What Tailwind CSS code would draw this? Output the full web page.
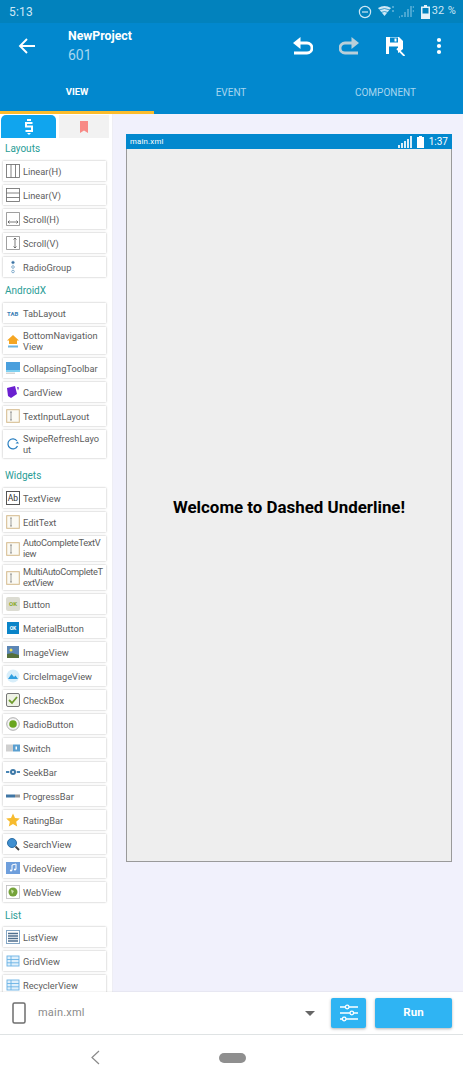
<!DOCTYPE html>
<html><head><meta charset="utf-8"><script src="https://cdn.jsdelivr.net/npm/@tailwindcss/browser@4"></script></head>
<body class="m-0">
<div class="w-[463px] h-[1080px] overflow-hidden flex flex-col bg-white font-['Roboto',sans-serif]">
  <div class="h-[23px] bg-[#0282bd] flex items-center justify-between pl-[9px] pr-[7px] text-[#cfe8f5] shrink-0">
    <span class="text-[12px] tracking-[0.2px]">5:13</span>
    <div class="flex items-center text-[11px]">
      <svg width="14" height="14" viewBox="0 0 14 14" fill="none" stroke="#cfe8f5" stroke-width="1.2"><circle cx="7" cy="7" r="5.6"/><path d="M4 7h6"/></svg>
      <svg width="16" height="13" viewBox="0 0 16 13" class="ml-[6px]"><path d="M0 3Q6.500-1 13 3L6.500 11Z" fill="#cfe8f5"/><path d="M1 5q5.500-3 11 0M3 7.500q3.500-2 7 0" fill="none" stroke="#0282bd" stroke-width=".7"/><path d="M15 1v2M15 5v2" stroke="#7fc2e2" stroke-width="1.2"/></svg>
      <svg width="16" height="13" viewBox="0 0 16 13" class="ml-[4px]"><path d="M1 12h1M4 12V10M7 12V7M10 12V4M13 12V1" stroke="#5fb2d9" stroke-width="1.500"/><path d="M15.300 1v2M15.300 5v2" stroke="#5fb2d9" stroke-width="1"/></svg>
      <svg width="9" height="14" viewBox="0 0 9 14" class="ml-[7px]"><path d="M3 0h3v1.500h3V14H0V1.500h3Z" fill="#e4f2f9"/><rect x="1.500" y="3" width="6" height="5.500" fill="#0282bd"/></svg>
      <span class="ml-[2px] tracking-[0.3px]">32 %</span>
    </div>
  </div>
  <div class="h-[88px] bg-[#0288ce] shrink-0 flex flex-col">
    <div class="h-[45px] flex items-center relative">
      <svg width="18" height="18" viewBox="0 0 18 18" fill="none" stroke="#fff" stroke-width="1.9" class="ml-[18px]"><path d="M17 9H2M9 2 2 9l7 7"/></svg>
      <div class="ml-[32px] flex flex-col mt-[3px]">
        <span class="text-[12.300px] leading-[15px] font-bold text-white">NewProject</span>
        <span class="text-[14px] leading-[20px] mt-[1px] text-[#a8d6ef]">601</span>
      </div>
      <div class="ml-auto flex items-center">
        <svg width="20" height="19" viewBox="0 0 20 19" fill="none" stroke="#fff" stroke-width="2.800"><path d="M5 7h9a4.500 4.500 0 0 1 0 10H1"/><path d="M7.500 1v12L0 7Z" fill="#fff" stroke="none"/></svg>
        <svg width="20" height="19" viewBox="0 0 20 19" fill="none" stroke="#b9cfd9" stroke-width="2.800" class="ml-[26px]"><path d="M15 7H6a4.500 4.500 0 0 0 0 10h13"/><path d="M12.500 1v12L20 7Z" fill="#b9cfd9" stroke="none"/></svg>
        <svg width="20" height="20" viewBox="0 0 20 20" class="ml-[26px]"><path d="M1 1h13l4 4v8l-6 5H1Z" fill="#fff"/><rect x="5" y="1.500" width="8" height="5" fill="#0288ce"/><rect x="9.500" y="2.500" width="2" height="3" fill="#fff"/><rect x="4" y="10.500" width="9" height="7.500" fill="#0288ce"/><path d="M12 12.500 19.500 20" stroke="#fff" stroke-width="1.800"/></svg>
        <svg width="6" height="18" viewBox="0 0 6 18" fill="#fff" class="ml-[31px] mr-[21px]"><circle cx="3" cy="3" r="2.100"/><circle cx="3" cy="9" r="2.100"/><circle cx="3" cy="15" r="2.100"/></svg>
      </div>
    </div>
    <div class="flex-1 flex">
      <div class="w-[154px] flex items-center justify-center text-[9.500px] font-bold text-white pt-[5px]">VIEW</div>
      <div class="w-[154px] flex items-center justify-center text-[10px] text-[#a8d6ef] pt-[5px]">EVENT</div>
      <div class="w-[155px] flex items-center justify-center text-[10px] text-[#a8d6ef] pt-[5px]">COMPONENT</div>
    </div>
  </div>
  <div class="h-[3px] shrink-0 bg-[#0288ce]"><div class="w-[154px] h-[3px] bg-[#fbbc2c]"></div></div>
  <div class="h-[878px] shrink-0 flex overflow-hidden bg-[#f1f1fc]">
    <div class="w-[113px] shrink-0 bg-white border-r border-[#eeeef4] overflow-hidden pl-[3px] text-[9.250px] text-[#5c5c5c] leading-[11px]">
      <div class="flex h-[23px] mt-[1px] -ml-[2px]">
        <div class="w-[55px] bg-[#10a5ee] rounded-t-[5px] flex items-center justify-center">
          <svg width="10" height="16" viewBox="0 0 10 16" fill="none" stroke="#fff" stroke-width="2"><path d="M8.500 4H2v3.500h6V12H1.500"/><path d="M3 14h4L5 16Z" fill="#fff" stroke="none"/><path d="M3 1h4" /></svg>
        </div>
        <div class="w-[50px] ml-[3px] bg-[#f2f2f2] flex items-center justify-center">
          <svg width="8" height="12" viewBox="0 0 8 12"><path d="M0 0h8v12L4 9.500 0 12Z" fill="#f88a86"/></svg>
        </div>
      </div>

      <div class="text-[#2a9d96] text-[10px] h-[20px] flex items-center ml-[2px]">Layouts</div>
      <div class="flex flex-col gap-[4px] w-[103px] mt-[3px]">
        <div class="h-[20px] bg-white shadow-[0_0_2px_rgba(0,0,0,0.3)] flex items-center"><svg class="ml-[3px] w-[14px] h-[14px] shrink-0" viewBox="0 0 14 14" fill="none" stroke="#666" stroke-width=".8"><rect x=".5" y=".5" width="13" height="13"/><path d="M5 .5v13M9.500 .5v13"/></svg><span class="ml-[3px]">Linear(H)</span></div>
        <div class="h-[20px] bg-white shadow-[0_0_2px_rgba(0,0,0,0.3)] flex items-center"><svg class="ml-[3px] w-[14px] h-[14px] shrink-0" viewBox="0 0 14 14" fill="none" stroke="#666" stroke-width=".8"><rect x=".5" y=".5" width="13" height="13"/><path d="M.5 5h13M.5 9.500h13"/></svg><span class="ml-[3px]">Linear(V)</span></div>
        <div class="h-[20px] bg-white shadow-[0_0_2px_rgba(0,0,0,0.3)] flex items-center"><svg class="ml-[3px] w-[14px] h-[14px] shrink-0" viewBox="0 0 14 14" fill="none" stroke="#777" stroke-width=".7"><path d="M.5 .5h13v13H.5Z"/><path d="M2 10h10M3.500 8.500 2 10l1.500 1.500M10.500 8.500 12 10l-1.500 1.500" stroke="#444"/></svg><span class="ml-[3px]">Scroll(H)</span></div>
        <div class="h-[20px] bg-white shadow-[0_0_2px_rgba(0,0,0,0.3)] flex items-center"><svg class="ml-[3px] w-[14px] h-[14px] shrink-0" viewBox="0 0 14 14" fill="none" stroke="#777" stroke-width=".7"><path d="M.5 .5h13v13H.5Z"/><path d="M9 2v10M7.500 3.500 9 2l1.500 1.500M7.500 10.500 9 12l1.500-1.500" stroke="#444"/></svg><span class="ml-[3px]">Scroll(V)</span></div>
        <div class="h-[20px] bg-white shadow-[0_0_2px_rgba(0,0,0,0.3)] flex items-center"><svg class="ml-[3px] w-[14px] h-[14px] shrink-0" viewBox="0 0 14 14" fill="none" stroke="#6a9ac0" stroke-width=".8"><circle cx="7" cy="2.500" r="1.300" fill="#35689a"/><circle cx="7" cy="7" r="1.300"/><circle cx="7" cy="11.500" r="1.300"/></svg><span class="ml-[3px]">RadioGroup</span></div>
      </div>

      <div class="text-[#2a9d96] text-[10px] h-[20px] flex items-center ml-[2px] mt-[3px]">AndroidX</div>
      <div class="flex flex-col gap-[4px] w-[103px] mt-[3px]">
        <div class="h-[20px] bg-white shadow-[0_0_2px_rgba(0,0,0,0.3)] flex items-center"><span class="ml-[4px] w-[13px] shrink-0 text-[6px] font-bold text-[#3d7fb5]">TAB</span><span class="ml-[3px]">TabLayout</span></div>
        <div class="h-[27px] bg-white shadow-[0_0_2px_rgba(0,0,0,0.3)] flex items-center"><svg class="ml-[3px] w-[14px] h-[14px] shrink-0" viewBox="0 0 14 14"><path d="M7 1 1 6.500h2V10h8V6.500h2Z" fill="#f5a623"/><rect x="2" y="11.500" width="10" height="2" fill="#6fb4dd"/></svg><span class="ml-[3px] w-[82px] break-all">BottomNavigation View</span></div>
        <div class="h-[20px] bg-white shadow-[0_0_2px_rgba(0,0,0,0.3)] flex items-center"><svg class="ml-[3px] w-[14px] h-[14px] shrink-0" viewBox="0 0 14 14"><rect y="1" width="14" height="8" fill="#4a9fdd"/><rect y="9" width="14" height="2" fill="#7fd0f0"/><rect y="11.500" width="9" height="1.500" fill="#d5d5d5"/></svg><span class="ml-[3px]">CollapsingToolbar</span></div>
        <div class="h-[20px] bg-white shadow-[0_0_2px_rgba(0,0,0,0.3)] flex items-center"><svg class="ml-[3px] w-[14px] h-[14px] shrink-0" viewBox="0 0 14 14"><path d="M1 3 9 1l2 8-6 4-3-2Z" fill="#6a1fd0"/><path d="M11 2l2 .5-1 3Z" fill="#6a1fd0"/></svg><span class="ml-[3px]">CardView</span></div>
        <div class="h-[20px] bg-white shadow-[0_0_2px_rgba(0,0,0,0.3)] flex items-center"><svg class="ml-[3px] w-[14px] h-[14px] shrink-0" viewBox="0 0 14 14" fill="#fbfaf4" stroke="#d4b98a"><rect x=".7" y=".7" width="12.600" height="12.600"/><path d="M4 3h2M5 3v8M4 11h2" stroke="#777" stroke-width=".7" fill="none"/></svg><span class="ml-[3px]">TextInputLayout</span></div>
        <div class="h-[28px] bg-white shadow-[0_0_2px_rgba(0,0,0,0.3)] flex items-center"><svg class="ml-[3px] w-[14px] h-[14px] shrink-0" viewBox="0 0 14 14" fill="none" stroke="#2a7fc0" stroke-width="1.200"><path d="M11.500 9A5 5 0 1 1 11 4"/><path d="M9.500 6.500H13L11.500 4.500Z" fill="#2a7fc0" stroke="none"/></svg><span class="ml-[3px] w-[79px] break-all">SwipeRefreshLayout</span></div>
      </div>

      <div class="text-[#2a9d96] text-[10px] h-[20px] flex items-center ml-[2px] mt-[7px]">Widgets</div>
      <div class="flex flex-col gap-[4px] w-[103px] mt-[3px]">
        <div class="h-[20px] bg-white shadow-[0_0_2px_rgba(0,0,0,0.3)] flex items-center"><span class="ml-[3px] w-[14px] h-[14px] shrink-0 border border-[#555] text-[8.500px] leading-[12px] text-center text-[#333]">Ab</span><span class="ml-[3px]">TextView</span></div>
        <div class="h-[20px] bg-white shadow-[0_0_2px_rgba(0,0,0,0.3)] flex items-center"><svg class="ml-[3px] w-[14px] h-[14px] shrink-0" viewBox="0 0 14 14" fill="#fbfaf4" stroke="#d4b98a"><rect x=".7" y=".7" width="12.600" height="12.600"/><path d="M4 3h2M5 3v8M4 11h2" stroke="#777" stroke-width=".7" fill="none"/></svg><span class="ml-[3px]">EditText</span></div>
        <div class="h-[25px] bg-white shadow-[0_0_2px_rgba(0,0,0,0.3)] flex items-center"><svg class="ml-[3px] w-[14px] h-[14px] shrink-0" viewBox="0 0 14 14" fill="#fbfaf4" stroke="#d4b98a"><rect x=".7" y=".7" width="12.600" height="12.600"/><path d="M4 3h2M5 3v8M4 11h2" stroke="#777" stroke-width=".7" fill="none"/></svg><span class="ml-[3px] whitespace-nowrap tracking-[-0.3px] leading-[10.500px]">AutoCompleteTextV<br>iew</span></div>
        <div class="h-[25px] bg-white shadow-[0_0_2px_rgba(0,0,0,0.3)] flex items-center"><svg class="ml-[3px] w-[14px] h-[14px] shrink-0" viewBox="0 0 14 14" fill="#fbfaf4" stroke="#d4b98a"><rect x=".7" y=".7" width="12.600" height="12.600"/><path d="M4 3h2M5 3v8M4 11h2" stroke="#777" stroke-width=".7" fill="none"/></svg><span class="ml-[3px] whitespace-nowrap tracking-[-0.3px] leading-[10.500px]">MultiAutoCompleteT<br>extView</span></div>
        <div class="h-[20px] bg-white shadow-[0_0_2px_rgba(0,0,0,0.3)] flex items-center"><span class="ml-[3px] w-[14px] h-[14px] shrink-0 rounded-[2px] bg-[#dcdcd2] text-[6px] font-bold leading-[14px] text-center text-[#8aa92a]">OK</span><span class="ml-[3px]">Button</span></div>
        <div class="h-[20px] bg-white shadow-[0_0_2px_rgba(0,0,0,0.3)] flex items-center"><span class="ml-[4px] w-[12px] h-[12px] mr-[1px] shrink-0 bg-[#0a84c8] text-[5px] font-bold leading-[12px] text-center text-white">OK</span><span class="ml-[3px]">MaterialButton</span></div>
        <div class="h-[20px] bg-white shadow-[0_0_2px_rgba(0,0,0,0.3)] flex items-center"><svg class="ml-[4px] mr-[1px] w-[12px] h-[12px] shrink-0" viewBox="0 0 12 12"><rect width="12" height="12" fill="#5c86b5"/><circle cx="4" cy="4" r="1.500" fill="#f2e25a"/><path d="M0 8 5 7l7 2v3H0Z" fill="#55703a"/></svg><span class="ml-[3px]">ImageView</span></div>
        <div class="h-[20px] bg-white shadow-[0_0_2px_rgba(0,0,0,0.3)] flex items-center"><svg class="ml-[3px] w-[14px] h-[14px] shrink-0" viewBox="0 0 14 14"><circle cx="7" cy="7" r="6.500" fill="#d8eefa"/><path d="M2 10 5.500 5 8 8l1.500-1.500L12 10Z" fill="#2f9fe0"/></svg><span class="ml-[3px]">CircleImageView</span></div>
        <div class="h-[20px] bg-white shadow-[0_0_2px_rgba(0,0,0,0.3)] flex items-center"><svg class="ml-[3px] w-[14px] h-[14px] shrink-0" viewBox="0 0 14 14"><rect x=".5" y=".5" width="13" height="13" rx="1.500" fill="#eef2e6" stroke="#777"/><path d="M3 7l3 3 5-6" fill="none" stroke="#6f9c2e" stroke-width="1.800"/></svg><span class="ml-[3px]">CheckBox</span></div>
        <div class="h-[20px] bg-white shadow-[0_0_2px_rgba(0,0,0,0.3)] flex items-center"><svg class="ml-[3px] w-[14px] h-[14px] shrink-0" viewBox="0 0 14 14"><circle cx="7" cy="7" r="6.300" fill="#f4f4f4" stroke="#999" stroke-width=".8"/><circle cx="7" cy="7" r="3.800" fill="#6aa51f"/></svg><span class="ml-[3px]">RadioButton</span></div>
        <div class="h-[20px] bg-white shadow-[0_0_2px_rgba(0,0,0,0.3)] flex items-center"><svg class="ml-[3px] w-[14px] h-[14px] shrink-0" viewBox="0 0 14 14"><rect y="3.500" width="7" height="7" fill="#cfcfcf"/><rect x="7" y="3.500" width="7" height="7" fill="#5a9fd0"/><rect x="9.500" y="5.500" width="1.500" height="3" fill="#fff"/></svg><span class="ml-[3px]">Switch</span></div>
        <div class="h-[20px] bg-white shadow-[0_0_2px_rgba(0,0,0,0.3)] flex items-center"><svg class="ml-[3px] w-[14px] h-[14px] shrink-0" viewBox="0 0 14 14"><path d="M0 7h14" stroke="#4a86b5" stroke-width="2"/><circle cx="7" cy="7" r="3.800" fill="#fff"/><circle cx="7" cy="7" r="3" fill="#3e79a8"/><circle cx="7" cy="7" r="1" fill="#fff"/></svg><span class="ml-[3px]">SeekBar</span></div>
        <div class="h-[20px] bg-white shadow-[0_0_2px_rgba(0,0,0,0.3)] flex items-center"><svg class="ml-[3px] w-[14px] h-[14px] shrink-0" viewBox="0 0 14 14"><rect y="5.500" width="9" height="3" fill="#3f76a5"/><rect x="9" y="5.500" width="5" height="3" fill="#9a9a9a"/></svg><span class="ml-[3px]">ProgressBar</span></div>
        <div class="h-[20px] bg-white shadow-[0_0_2px_rgba(0,0,0,0.3)] flex items-center"><svg class="ml-[3px] w-[14px] h-[14px] shrink-0" viewBox="0 0 14 14"><path d="M7 .5 9 5l4.800.500-3.600 3.200 1 4.800L7 11l-4.200 2.500 1-4.800L.2 5.500 5 5Z" fill="#f7bb2e"/></svg><span class="ml-[3px]">RatingBar</span></div>
        <div class="h-[20px] bg-white shadow-[0_0_2px_rgba(0,0,0,0.3)] flex items-center"><svg class="ml-[3px] w-[14px] h-[14px] shrink-0" viewBox="0 0 14 14"><circle cx="6" cy="6" r="4.500" fill="#3f8fd0" stroke="#2c6ea5"/><path d="M9.500 9.500 13 13" stroke="#444" stroke-width="1.800"/></svg><span class="ml-[3px]">SearchView</span></div>
        <div class="h-[20px] bg-white shadow-[0_0_2px_rgba(0,0,0,0.3)] flex items-center"><svg class="ml-[3px] w-[14px] h-[14px] shrink-0" viewBox="0 0 14 14"><rect y="1" width="14" height="12" fill="#6f9fdc"/><path d="M6 9.500V4l4-1v5.500" stroke="#fff" fill="none"/><circle cx="5" cy="9.500" r="1.100" fill="#fff"/><circle cx="9" cy="8.500" r="1.100" fill="#fff"/></svg><span class="ml-[3px]">VideoView</span></div>
        <div class="h-[20px] bg-white shadow-[0_0_2px_rgba(0,0,0,0.3)] flex items-center"><svg class="ml-[3px] w-[14px] h-[14px] shrink-0" viewBox="0 0 14 14"><rect x=".5" y=".5" width="13" height="13" fill="#fff" stroke="#bbb" stroke-width=".8"/><circle cx="7" cy="7" r="4.500" fill="#75a33a"/><path d="M5 4.500 8 6 6 9Z" fill="#cfe3b0"/></svg><span class="ml-[3px]">WebView</span></div>
      </div>

      <div class="text-[#2a9d96] text-[10px] h-[20px] flex items-center ml-[2px] mt-[3px]">List</div>
      <div class="flex flex-col gap-[4px] w-[103px] mt-[2px]">
        <div class="h-[20px] bg-white shadow-[0_0_2px_rgba(0,0,0,0.3)] flex items-center"><svg class="ml-[3px] w-[14px] h-[14px] shrink-0" viewBox="0 0 14 14" fill="none"><rect x=".5" y=".5" width="13" height="13" stroke="#86a8c6"/><path d="M2 3.500h10M2 6h10M2 8.500h10M2 11h10" stroke="#4f6f8e" stroke-width="1.300"/></svg><span class="ml-[3px]">ListView</span></div>
        <div class="h-[20px] bg-white shadow-[0_0_2px_rgba(0,0,0,0.3)] flex items-center"><svg class="ml-[3px] w-[14px] h-[14px] shrink-0" viewBox="0 0 14 14" fill="#e0f0fb" stroke="#6ab2e4" stroke-width=".9"><rect x="1" y="2" width="12" height="10"/><path d="M1 5.500h12M1 8.800h12M5 2v10" fill="none"/></svg><span class="ml-[3px]">GridView</span></div>
        <div class="h-[20px] bg-white shadow-[0_0_2px_rgba(0,0,0,0.3)] flex items-center"><svg class="ml-[3px] w-[14px] h-[14px] shrink-0" viewBox="0 0 14 14" fill="#e0f0fb" stroke="#6ab2e4" stroke-width=".9"><rect x="1" y="2" width="12" height="10"/><path d="M1 5.500h12M1 8.800h12M5 2v10" fill="none"/></svg><span class="ml-[3px]">RecyclerView</span></div>
      </div>
    </div>
    <div class="flex-1 pl-[13px] pt-[20px]">
      <div class="w-[326px] h-[728px] flex flex-col bg-[#eeeeee] border-x border-b border-[#9a9a9a]">
        <div class="h-[15px] shrink-0 -mx-px bg-[#0288ce] flex items-center justify-between pl-[4px] pr-[4px] text-white">
          <span class="text-[7.800px] tracking-[0.2px]">main.xml</span>
          <div class="flex items-center">
            <svg width="14" height="12" viewBox="0 0 14 12" stroke="#fff" stroke-width="1.700"><path d="M1 12V9M4 12V7M7 12V5M10 12V3M13 12V0"/></svg>
            <svg width="7" height="12" viewBox="0 0 7 12" class="ml-[5px]"><path d="M2 0h3v1h2v11H0V1h2Z" fill="#fff"/></svg>
            <span class="ml-[5px] text-[10px]">1:37</span>
          </div>
        </div>
        <div class="flex-1 flex items-center justify-center pt-[5px] text-[16.900px] font-bold text-black">Welcome to Dashed Underline!</div>
      </div>
    </div>
  </div>
  <div class="h-[43px] shrink-0 bg-white border-b border-[#dfe3e4] flex items-center shadow-[0_-1px_1px_rgba(0,0,0,0.04)] relative">
    <svg width="14" height="22" viewBox="0 0 14 22" fill="none" stroke="#6e6e6e" stroke-width="1.500" class="ml-[12px]"><rect x="1" y="1" width="12" height="20" rx="1.500"/></svg>
    <span class="ml-[12px] text-[11px] text-[#8a8a8a] tracking-[0.2px]">main.xml</span>
    <svg width="10" height="5" viewBox="0 0 10 5" class="ml-[220px]"><path d="M0 0h10L5 5Z" fill="#666"/></svg>
    <div class="ml-auto flex items-center pr-[11px]">
      <div class="w-[35px] h-[30px] bg-[#2fb4f3] rounded-[2px] shadow-[0_1px_3px_rgba(0,0,0,0.3)] flex items-center justify-center">
        <svg width="20" height="18" viewBox="0 0 20 18" fill="none" stroke="#fff" stroke-width="1.300"><path d="M1 3h5.500M10 3h9M1 9h10M14.500 9H19M1 15h2.500M7 15h12"/><circle cx="8.200" cy="3" r="1.800"/><circle cx="12.800" cy="9" r="1.800"/><circle cx="5.200" cy="15" r="1.800"/></svg>
      </div>
      <div class="ml-[9px] w-[77px] h-[30px] bg-[#2fb4f3] rounded-[2px] shadow-[0_1px_3px_rgba(0,0,0,0.3)] flex items-center justify-center text-[11.500px] font-bold text-white">Run</div>
    </div>
  </div>
  <div class="flex-1 flex items-center relative">
    <svg width="10" height="15" viewBox="0 0 10 15" fill="none" stroke="#8a8a8a" stroke-width="1.200" class="ml-[90px]"><path d="M9 1 2 7.500 9 14"/></svg>
    <div class="ml-[119px] w-[27px] h-[10px] rounded-full bg-[#8f8f8f]"></div>
  </div>
</div>
</body></html>
